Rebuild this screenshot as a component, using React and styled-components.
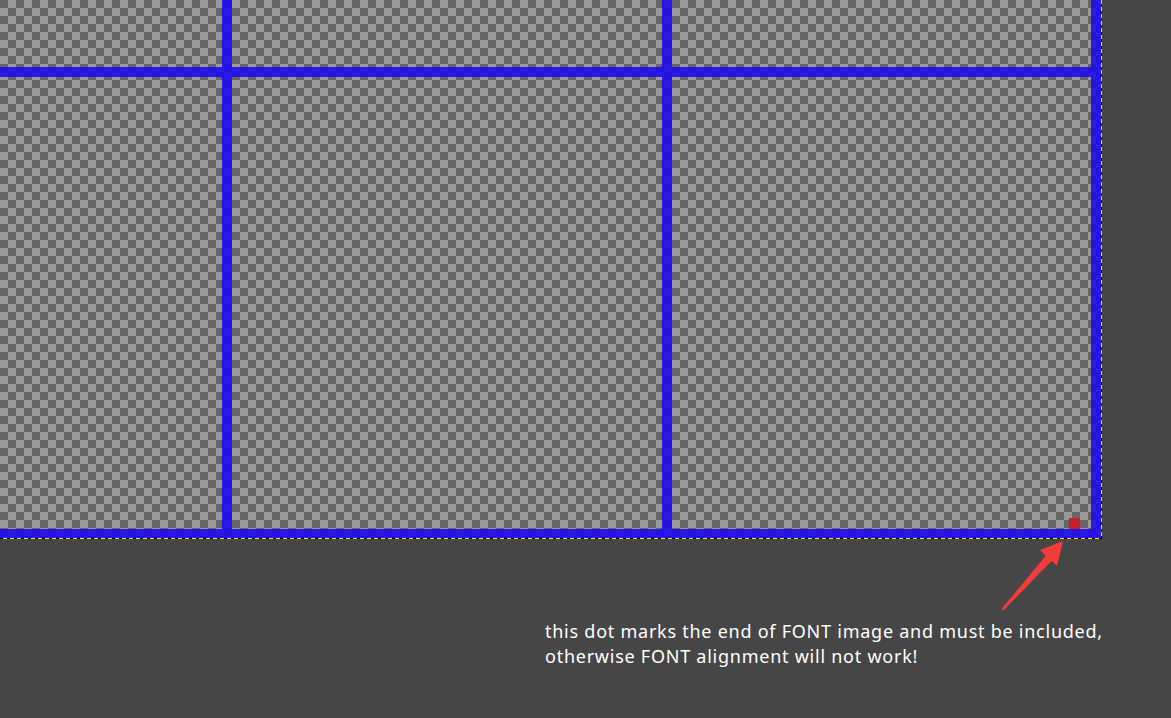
import React from "react";
import styled, { createGlobalStyle } from "styled-components";

const Global = createGlobalStyle`
  html, body { margin: 0; padding: 0; }
  body {
    background: #464646;
    width: 1171px;
    height: 718px;
    overflow: hidden;
    font-family: "Noto Sans", "Open Sans", sans-serif;
  }
`;

const Page = styled.div`
  display: flex;
  flex-direction: column;
  align-items: flex-start;
`;

const Frame = styled.div`
  padding: 0 1px 1px 0;
  background:
    repeating-linear-gradient(to bottom, #fff200 0 4px, #000 4px 7px) right top / 1px 100% no-repeat,
    repeating-linear-gradient(to right, #000 0 3px, #fff200 3px 7px) left bottom / 100% 1px no-repeat,
    #000;
`;

const Canvas = styled.div`
  width: 1101px;
  height: 538px;
  display: grid;
  grid-template-columns: 222px 10px 430px 10px 419px 10px;
  grid-template-rows: 67px 10px 452px 9px;
  background: repeating-conic-gradient(#999999 0 25%, #666666 0 50%) 0 0 / 16px 16px;
`;

const LINE = "rgba(27, 8, 241, 0.88)";

const VSeg = styled.div`
  grid-column: ${(p) => p.$col};
  grid-row: ${(p) => p.$row};
  background: ${LINE};
`;

const HLine = styled.div`
  grid-column: 1 / -1;
  grid-row: ${(p) => p.$row};
  background: ${LINE};
`;

const DotCell = styled.div`
  grid-column: 5;
  grid-row: 3;
  display: flex;
  justify-content: flex-end;
  align-items: flex-end;
  padding-right: 11px;
`;

const Dot = styled.div`
  width: 11px;
  height: 11px;
  background: #c8202b;
`;

const ArrowRow = styled.div`
  display: flex;
  padding-left: 1000px;
  margin-top: -1px;
  height: 76px;
`;

const Note = styled.div`
  margin-left: 545px;
  margin-top: 5px;
  color: #ffffff;
  font-size: 18px;
  letter-spacing: 0.75px;
  line-height: 25px;
  white-space: nowrap;
`;

const Arrow = () => (
  <svg width="68" height="76" viewBox="0 0 68 76">
    <polygon
      points="1.5,71 45.5,18 40,12 63,3 57,28 51.5,23 3.5,72.5"
      fill="#f23b3b"
    />
  </svg>
);

export default function App() {
  const segs = [];
  [2, 4, 6].forEach((c) =>
    [1, 3].forEach((r) => segs.push(<VSeg key={`${c}-${r}`} $col={c} $row={r} />))
  );
  return (
    <>
      <Global />
      <Page>
        <Frame>
          <Canvas>
            {segs}
            <HLine $row={2} />
            <HLine $row={4} />
            <DotCell>
              <Dot />
            </DotCell>
          </Canvas>
        </Frame>
        <ArrowRow>
          <Arrow />
        </ArrowRow>
        <Note>
          this dot marks the end of FONT image and must be included,
          <br />
          otherwise FONT alignment will not work!
        </Note>
      </Page>
    </>
  );
}
